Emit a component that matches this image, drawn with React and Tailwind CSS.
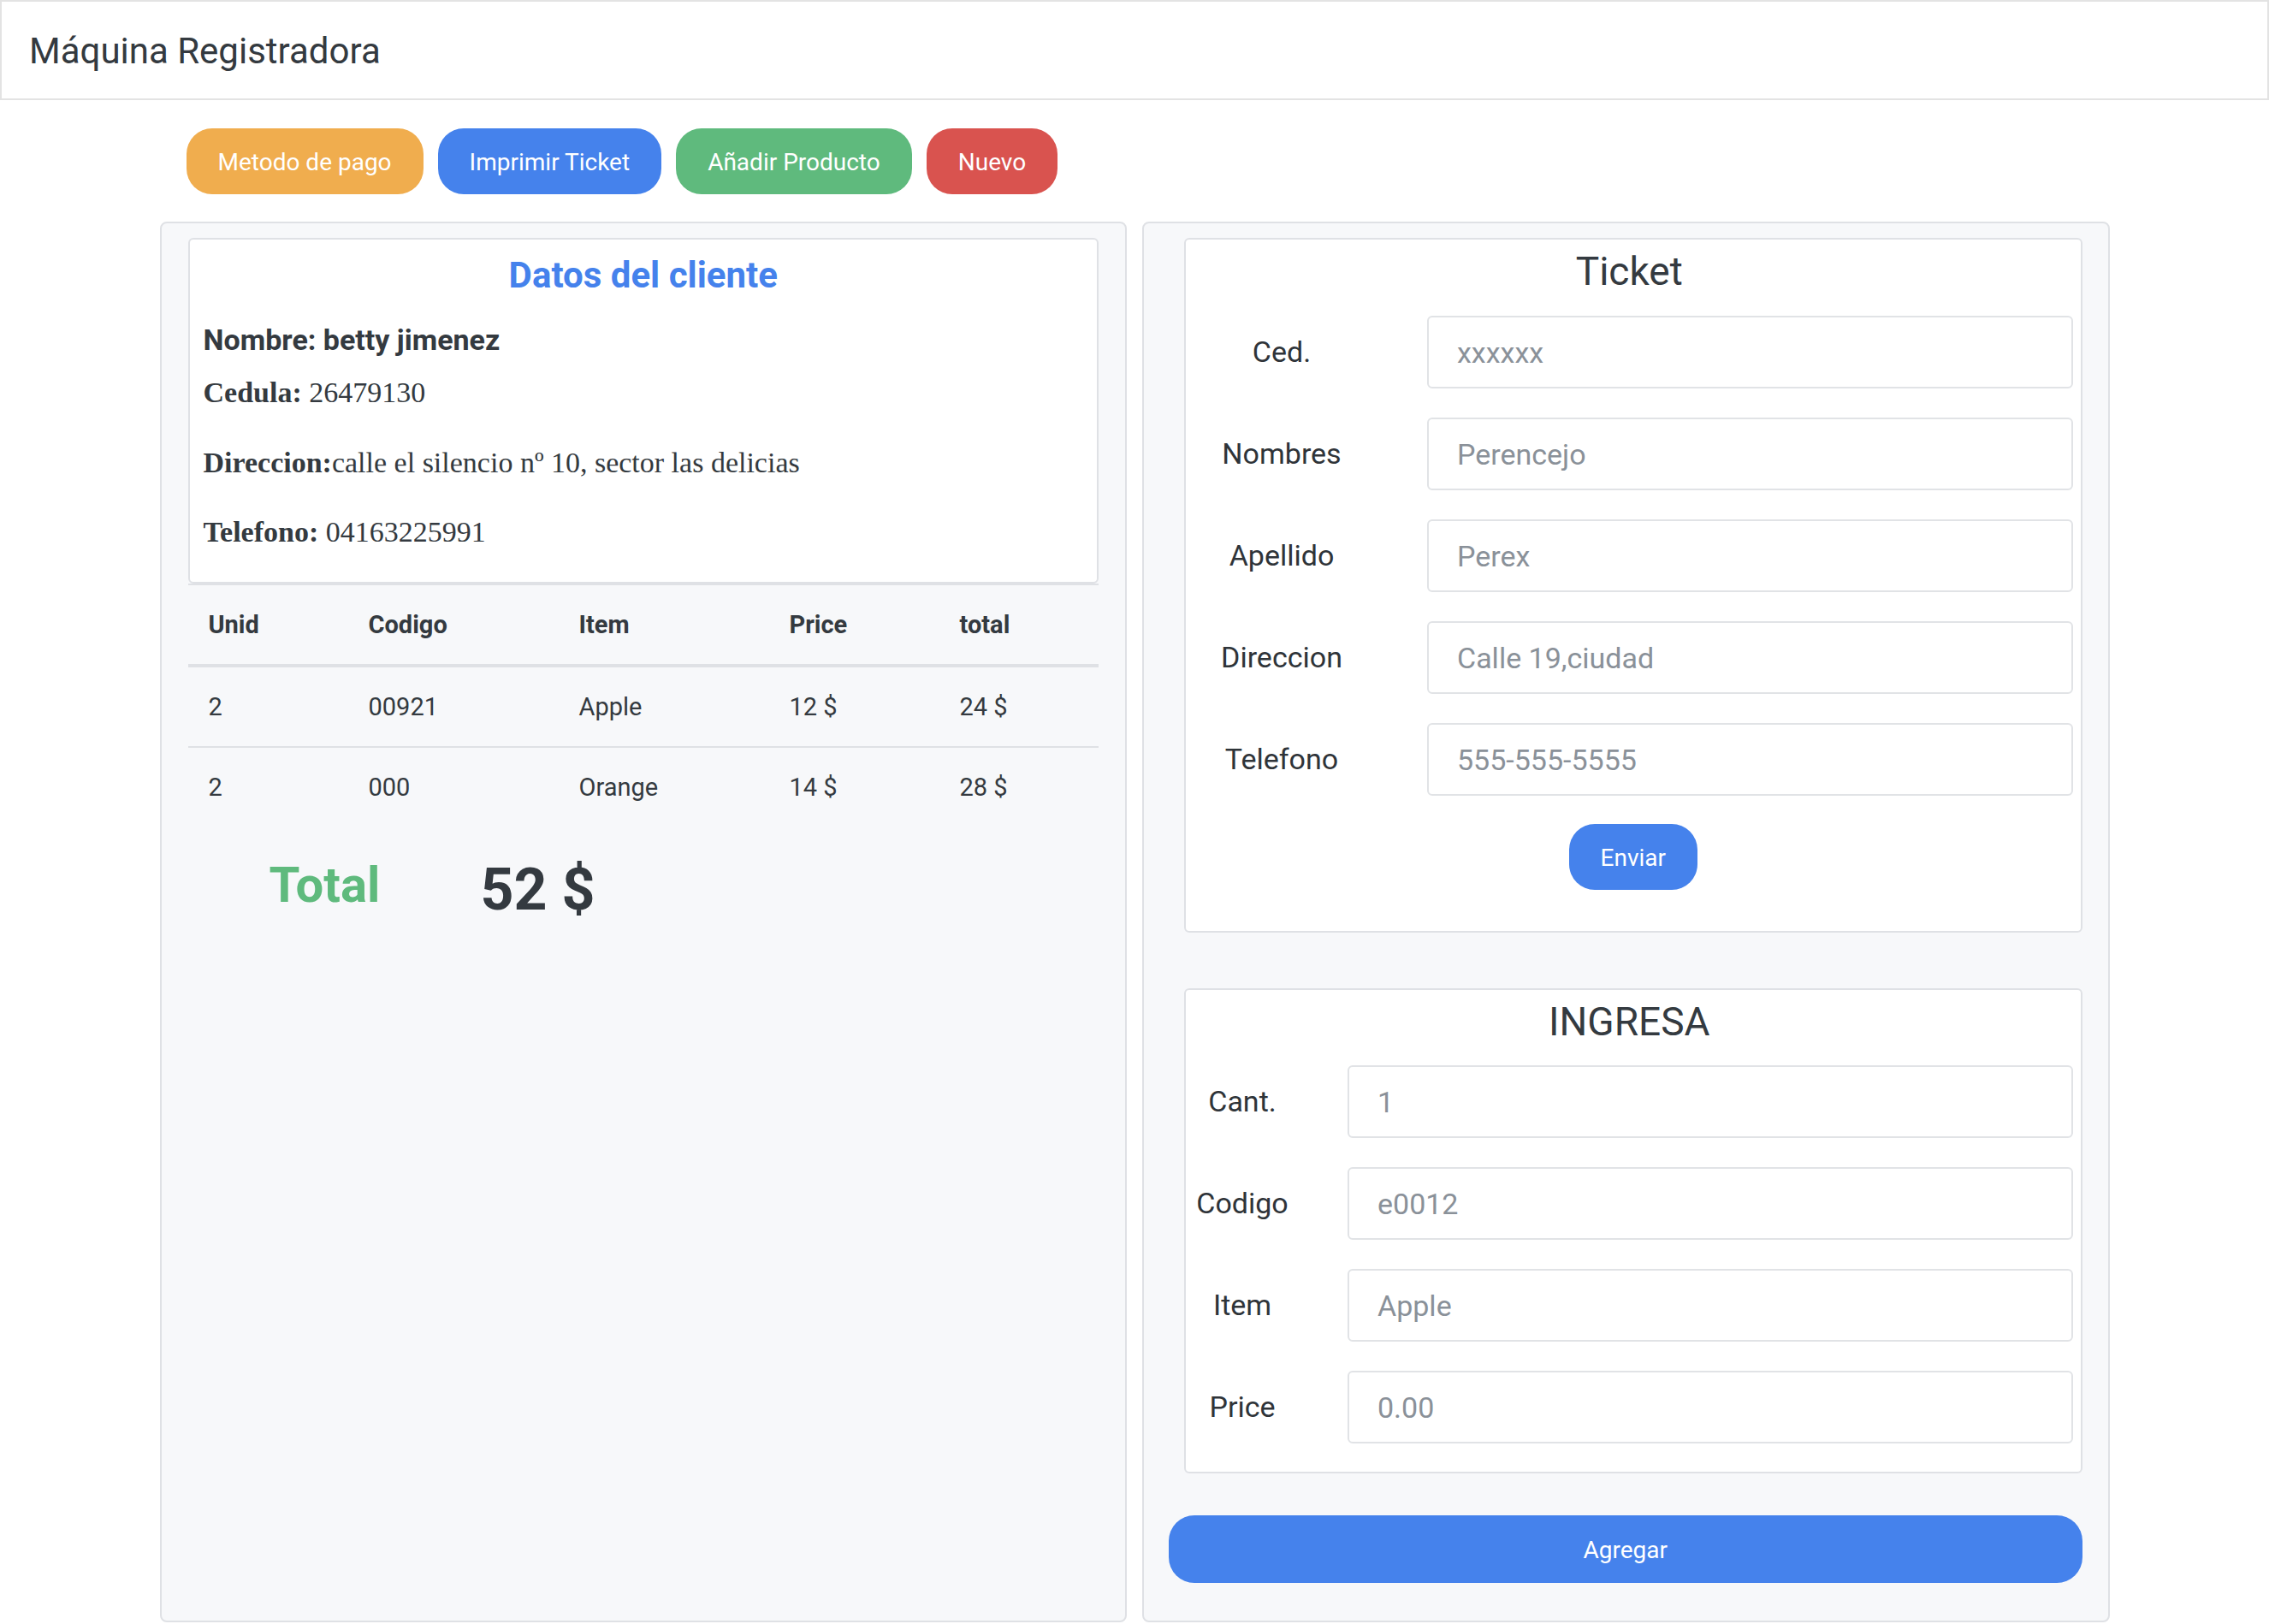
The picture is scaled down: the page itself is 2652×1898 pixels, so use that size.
import React from "react";

const btn =
  "h-[77px] px-[37px] pt-[3px] rounded-[30px] text-white text-[28px] leading-none flex items-center justify-center";

function Field({ label, placeholder, labelW, gap }) {
  return (
    <div className="flex items-center h-[85px]">
      <div
        className="shrink-0 text-center text-[34px] text-[#2f3439]"
        style={{ width: labelW }}
      >
        {label}
      </div>
      <input
        placeholder={placeholder}
        className="h-[85px] flex-1 min-w-0 border-2 border-[#e1e3e6] rounded-[6px] bg-white pl-[33px] text-[34px] text-[#343a40] placeholder:text-[#8a9199] outline-none"
        style={{ marginLeft: gap }}
      />
    </div>
  );
}

export default function App() {
  const rows = [
    ["2", "00921", "Apple", "12 $", "24 $"],
    ["2", "000", "Orange", "14 $", "28 $"],
  ];
  return (
    <div className="min-h-screen bg-white font-[Roboto,sans-serif] text-[#343a40]">
      <header className="h-[117px] border-2 border-[#e3e3e3] flex items-center pl-[32px]">
        <h1 className="text-[42px] leading-[50px] font-normal text-[#343a40] pt-[2px]">
          Máquina Registradora
        </h1>
      </header>

      <div className="w-[2279px] mx-auto">
        <div className="flex gap-[17px] ml-[31px] mt-[33px]">
          <button className={`${btn} bg-[#f0ad4e]`}>Metodo de pago</button>
          <button className={`${btn} bg-[#4582ec]`}>Imprimir Ticket</button>
          <button className={`${btn} bg-[#5fba7d]`}>Añadir Producto</button>
          <button className={`${btn} bg-[#d9534f]`}>Nuevo</button>
        </div>

        <div className="grid grid-cols-2 gap-[18px] mt-[32px]">
          {/* Left panel */}
          <div className="border-2 border-[#dfe1e5] rounded-[8px] bg-[#f7f8fa] px-[31px] pt-[17px]">
            <div className="border-2 border-[#dfe1e5] rounded-[6px] bg-white pt-[17px] px-[16px] pb-[33px]">
              <h3 className="text-center text-[42px] leading-[50px] font-bold text-[#4582ec]">
                Datos del cliente
              </h3>
              <div className="mt-[30px] text-[34px] leading-[41px] font-bold text-[#343a40]">
                Nombre: betty jimenez
              </div>
              <div className="font-['Liberation_Serif',serif] text-[34px] leading-[51px] text-[#343a40]">
                <p className="mt-[15px]">
                  <b>Cedula:</b> 26479130
                </p>
                <p className="mt-[31px]">
                  <b>Direccion:</b>calle el silencio nº 10, sector las delicias
                </p>
                <p className="mt-[30px]">
                  <b>Telefono:</b> 04163225991
                </p>
              </div>
            </div>

            <table className="w-full table-fixed border-collapse text-[29px] leading-[44px]">
              <colgroup>
                <col style={{ width: 187 }} />
                <col style={{ width: 246 }} />
                <col style={{ width: 246 }} />
                <col style={{ width: 199 }} />
                <col />
              </colgroup>
              <thead>
                <tr className="border-t-2 border-b-4 border-[#dfe1e5]">
                  {["Unid", "Codigo", "Item", "Price", "total"].map((h) => (
                    <th key={h} className="text-left font-bold pl-[24px] py-[24px]">
                      {h}
                    </th>
                  ))}
                </tr>
              </thead>
              <tbody>
                {rows.map((r, i) => (
                  <tr key={i} className={i === 0 ? "border-b-2 border-[#dfe1e5]" : ""}>
                    {r.map((c, j) => (
                      <td key={j} className="pl-[24px] py-[24px]">
                        {c}
                      </td>
                    ))}
                  </tr>
                ))}
              </tbody>
            </table>

            <div className="flex items-start mt-[34px] pl-[95px]">
              <div className="w-[247px] text-[58px] leading-[69px] font-bold text-[#5fba7d]">
                Total
              </div>
              <div className="text-[68px] leading-[80px] font-bold text-[#343a40]">52 $</div>
            </div>
          </div>

          {/* Right panel */}
          <div className="border-2 border-[#dfe1e5] rounded-[8px] bg-[#f7f8fa] pl-[29px] pr-[30px] pt-[17px] pb-[44px]">
            <div className="ml-[18px] border-2 border-[#dfe1e5] rounded-[6px] bg-white pt-[10px] pr-[9px] pb-[48px]">
              <h3 className="text-center text-[46px] leading-[55px] font-normal text-[#343a40]">
                Ticket
              </h3>
              <div className="mt-[24px] flex flex-col gap-[34px]">
                <Field label="Ced." placeholder="xxxxxx" labelW={224} gap={58} />
                <Field label="Nombres" placeholder="Perencejo" labelW={224} gap={58} />
                <Field label="Apellido" placeholder="Perex" labelW={224} gap={58} />
                <Field label="Direccion" placeholder="Calle 19,ciudad" labelW={224} gap={58} />
                <Field label="Telefono" placeholder="555-555-5555" labelW={224} gap={58} />
              </div>
              <div className="mt-[33px] flex justify-center pl-[9px]">
                <button className={`${btn} bg-[#4582ec]`}>Enviar</button>
              </div>
            </div>

            <div className="ml-[18px] mt-[65px] border-2 border-[#dfe1e5] rounded-[6px] bg-white pt-[10px] pr-[9px] pb-[33px]">
              <h3 className="text-center text-[46px] leading-[55px] font-normal text-[#343a40]">
                INGRESA
              </h3>
              <div className="mt-[23px] flex flex-col gap-[34px]">
                <Field label="Cant." placeholder="1" labelW={132} gap={57} />
                <Field label="Codigo" placeholder="e0012" labelW={132} gap={57} />
                <Field label="Item" placeholder="Apple" labelW={132} gap={57} />
                <Field label="Price" placeholder="0.00" labelW={132} gap={57} />
              </div>
            </div>

            <button className="mt-[49px] w-full h-[79px] pt-[2px] rounded-[30px] bg-[#4582ec] text-white text-[28px] flex items-center justify-center">
              Agregar
            </button>
          </div>
        </div>
      </div>
    </div>
  );
}
